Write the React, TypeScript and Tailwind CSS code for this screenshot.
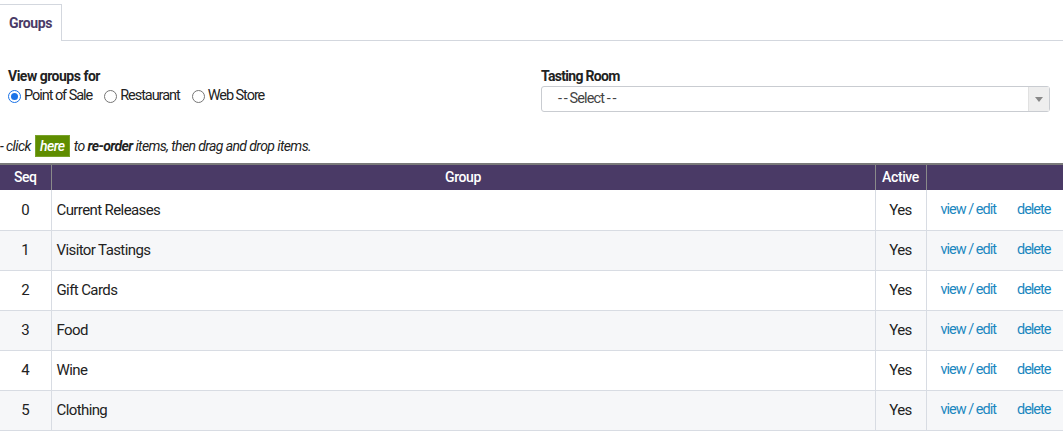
const rows = [
  { seq: 0, name: "Current Releases" },
  { seq: 1, name: "Visitor Tastings" },
  { seq: 2, name: "Gift Cards" },
  { seq: 3, name: "Food" },
  { seq: 4, name: "Wine" },
  { seq: 5, name: "Clothing" },
];

function Radio({ checked, label }: { checked?: boolean; label: string }) {
  return (
    <label className="flex items-center gap-[3px]">
      <span
        className={
          checked
            ? "flex h-[13px] w-[13px] items-center justify-center rounded-full border border-[#1a73e8] bg-white"
            : "h-[13px] w-[13px] rounded-full border border-[#767676] bg-white"
        }
      >
        {checked && <span className="h-[7px] w-[7px] rounded-full bg-[#1a73e8]" />}
      </span>
      <span className="text-[14.5px] tracking-[-1.05px]">{label}</span>
    </label>
  );
}

export default function App() {
  return (
    <div className="min-h-[431px] bg-white text-[14px] text-[#222] tracking-[-0.4px]" style={{ fontFamily: "Roboto, 'Liberation Sans', sans-serif" }}>
      {/* tabs */}
      <div className="flex pt-[4px]">
        <div className="flex h-[37px] w-[62px] items-center justify-center border-t border-r border-[#d3d7de] bg-white font-bold text-[#4a3a66]">
          Groups
        </div>
        <div className="flex-1 border-b border-[#d3d7de]" />
      </div>

      {/* filters */}
      <div className="mt-[26px] flex">
        <div className="w-[541px] pl-[8px]">
          <div className="font-bold leading-[18px] tracking-[-0.5px]">View groups for</div>
          <div className="mt-[2px] flex items-center gap-[12px] leading-[18px]">
            <Radio checked label="Point of Sale" />
            <Radio label="Restaurant" />
            <Radio label="Web Store" />
          </div>
        </div>
        <div className="w-[509px]">
          <div className="font-bold leading-[18px] tracking-[-0.7px]">Tasting Room</div>
          <div className="mt-[1px] flex h-[26px] items-stretch rounded-[3px] border border-[#c9ccd1] bg-white">
            <div className="flex flex-1 items-center pl-[16px] text-[14.5px] tracking-[-0.9px] text-[#444]">- - Select - -</div>
            <div className="flex w-[21px] items-center justify-center border-l border-[#e1e1e1] bg-[#eeeeee]">
              <svg width="8" height="5" viewBox="0 0 8 5">
                <path d="M0 0h8L4 5z" fill="#888" />
              </svg>
            </div>
          </div>
        </div>
      </div>

      {/* instruction */}
      <div className="mt-[23px] flex items-center italic leading-[22px] tracking-[-0.6px]">
        <span>- click</span>
        <span className="mx-[4px] flex h-[22px] w-[35px] items-center justify-center border border-[#79a22a] bg-[#5f8d00] font-medium text-white">
          here
        </span>
        <span>
          to <b>re-order</b> items, then drag and drop items.
        </span>
      </div>

      {/* table */}
      <table className="mt-[6px] w-full border-collapse border-t-2 border-[#7a7a7a]">
        <thead>
          <tr className="h-[26px] bg-[#4a3a66] text-white">
            <th className="w-[51px] border-r border-[#8a8a8a] font-medium">Seq</th>
            <th className="font-medium">Group</th>
            <th className="w-[51px] border-x border-[#8a8a8a] font-medium">Active</th>
            <th className="w-[137px]" />
          </tr>
        </thead>
        <tbody className="text-[15px] tracking-[-0.6px]">
          {rows.map((r, i) => (
            <tr
              key={r.seq}
              className={
                (i % 2 === 1 ? "bg-[#f6f7f9] " : "bg-white ") +
                "h-[40px] border-b border-[#d8dce3]"
              }
            >
              <td className="border-r border-[#d8dce3] text-center">{r.seq}</td>
              <td className="pl-[5px]">{r.name}</td>
              <td className="border-x border-[#d8dce3] text-center">Yes</td>
              <td className="text-[14.5px] tracking-[-1px] text-[#1a87c0]">
                <div className="flex">
                  <span className="ml-[14px]">view / edit</span>
                  <span className="ml-[21px]">delete</span>
                </div>
              </td>
            </tr>
          ))}
        </tbody>
      </table>
    </div>
  );
}
